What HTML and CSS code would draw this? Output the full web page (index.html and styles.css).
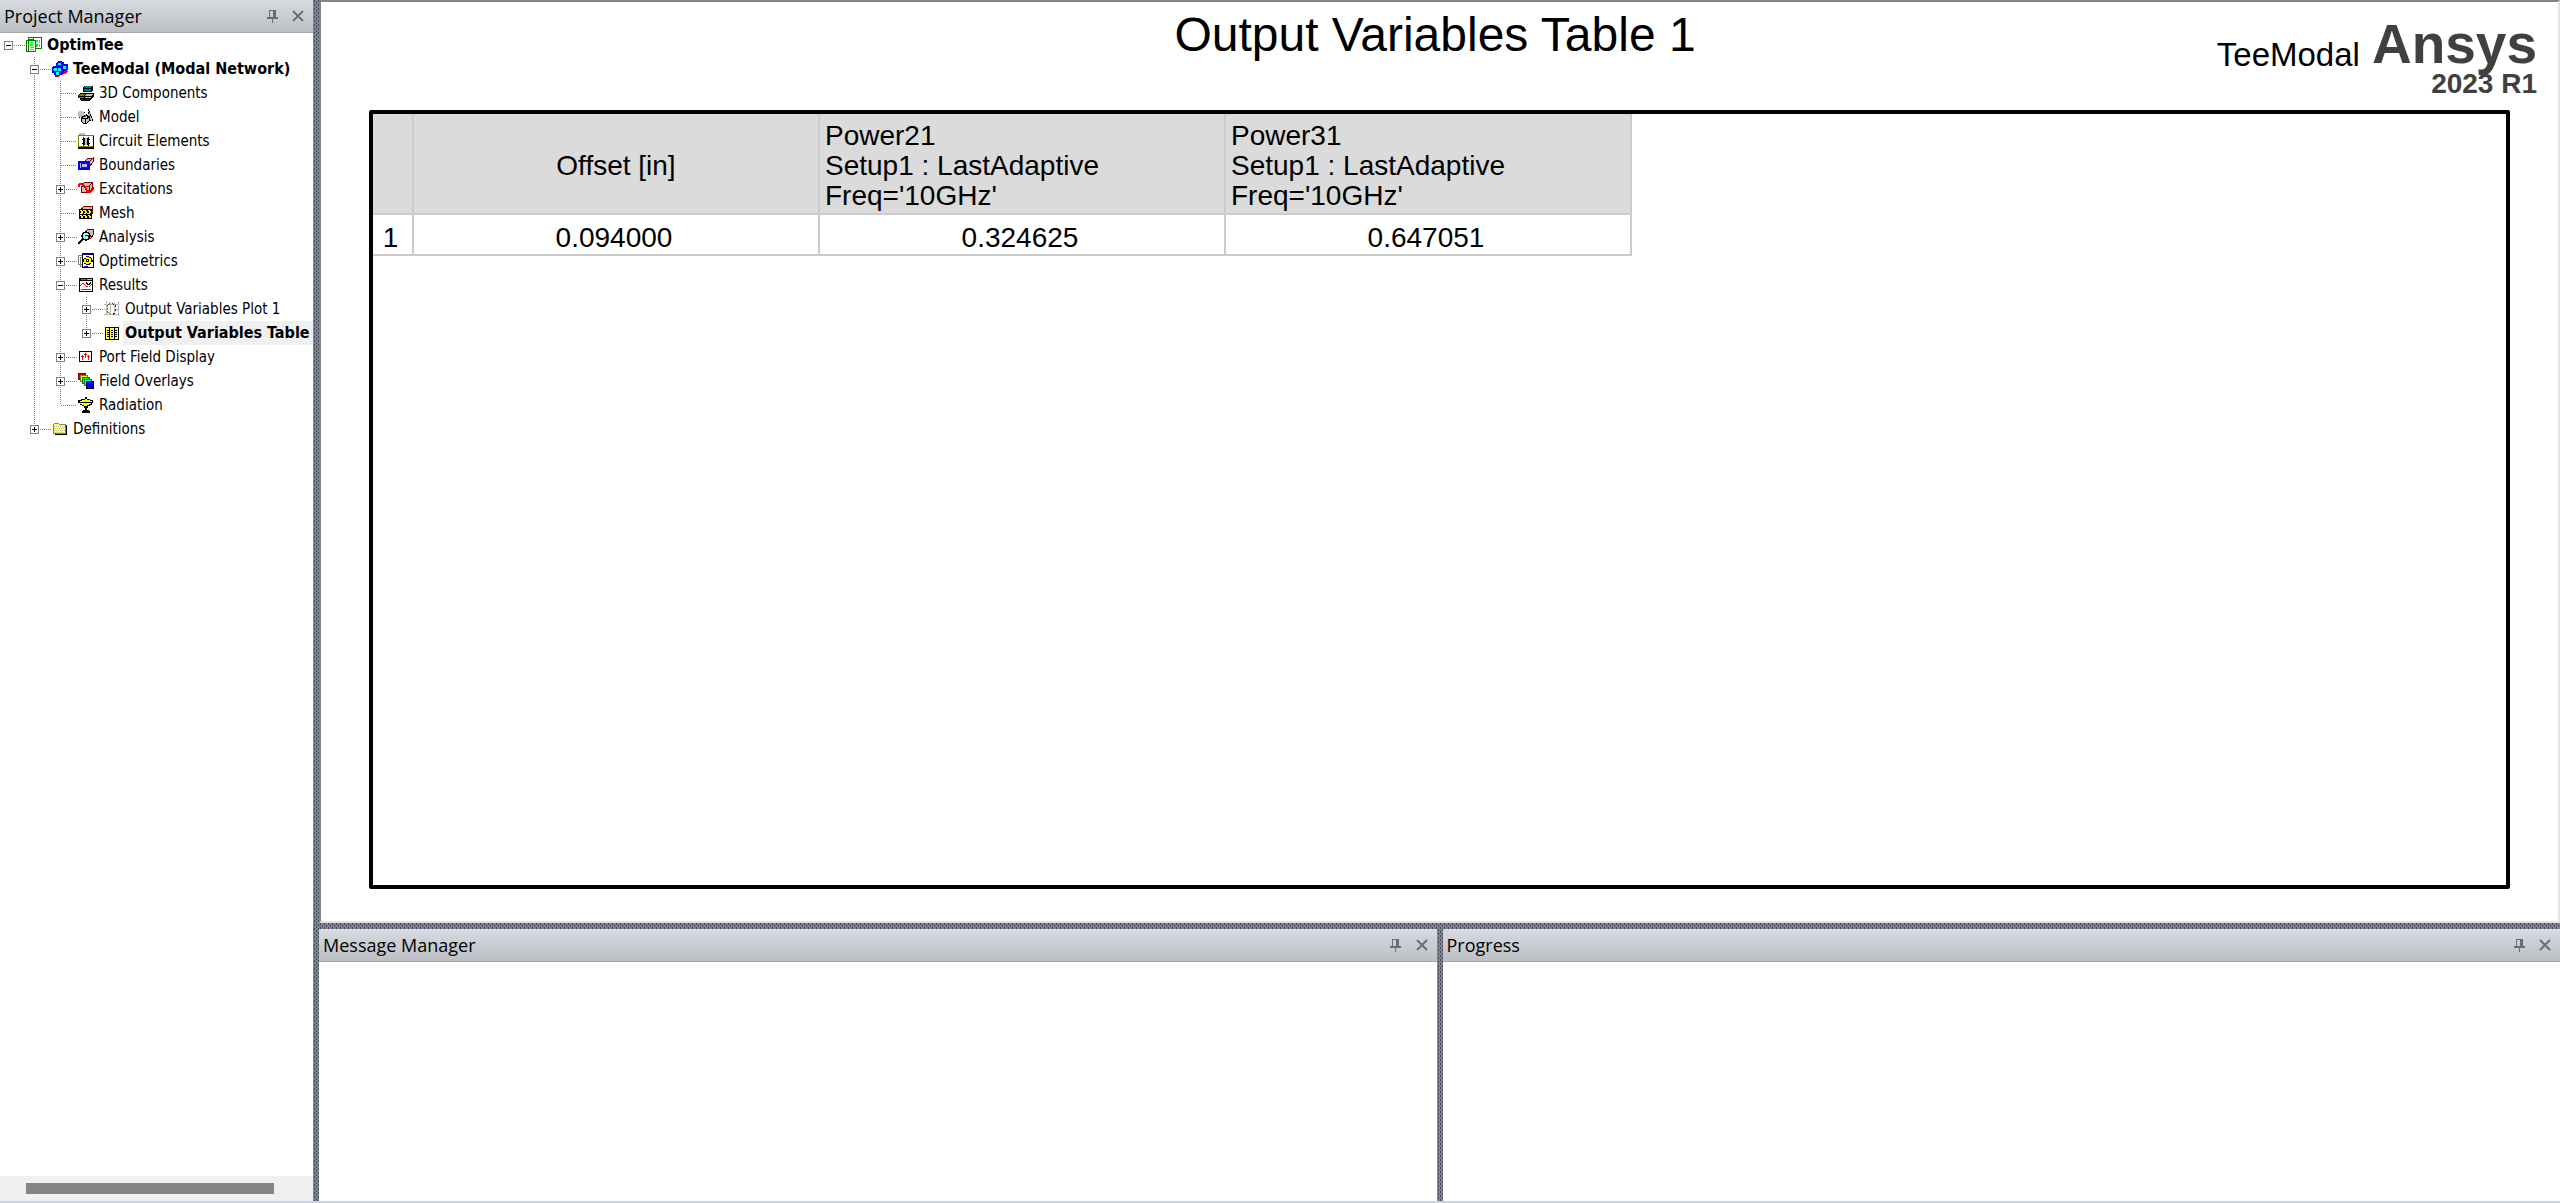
FILE: index.html
```html
<!DOCTYPE html>
<html lang="en">
<head>
<meta charset="utf-8">
<title>OptimTee - Output Variables Table 1</title>
<link rel="stylesheet" href="styles.css">
</head>
<body>
<svg class="defs" aria-hidden="true">
  <symbol id="pin" viewBox="0 0 11 13"><path fill="#6d6d6d" d="M2 0h7v7H8V1H3v6H2zM6 1h2v6H6zM0 7h11v2H0zM5 9h1v4H5z"/></symbol>
  <symbol id="close" viewBox="0 0 12 12"><path stroke="#6d6d6d" stroke-width="2" fill="none" d="M1 1l10 10M11 1L1 11"/></symbol>
</svg>
<div class="app">
  <aside class="panel project">
    <header class="panel-head">
      <h2>Project Manager</h2>
      <button aria-label="Auto hide"><svg width="11" height="13"><use href="#pin"/></svg></button>
      <button aria-label="Close"><svg width="12" height="12"><use href="#close"/></svg></button>
    </header>
    <nav class="tree-scroll">
      <ul class="tree">
        <li>
          <div class="row"><button class="box" aria-label="Collapse"></button><i class="dots"></i>
            <svg class="icon" viewBox="0 0 16 16"><path fill="#008000" d="M2 0h14v12h-6v3H0V3h2z"/><path fill="#fff" d="M3 1h4v1H3zM8 1h7v10h-5V3H8zM1 4h1v10H1zM3 4h6v10H3z"/><path fill="#0f0" d="M4 5h3v1H4zM4 7h3v2H4zM4 10h4v1H4zM4 12h4v1H4zM10 3h2v2h-2zM13 3h1v3h-1zM10 7h2v3h-2zM13 7h1v3h-1z"/></svg>
            <b class="label">OptimTee</b></div>
          <ul>
            <li>
              <div class="row"><button class="box" aria-label="Collapse"></button><i class="dots"></i>
                <svg class="icon" viewBox="0 0 16 16"><path fill="red" d="M3 13h6l3-3h4l-3 3-4 1-3 2H3z"/><path fill="#00f" d="M6 0h4v1h2v2h3l1 1v5l-2 1h-2v2h-2v2H8l-1 1H3l-1-3H0V6h1V5h3V2h1z"/><path fill="#0ff" d="M6 2h3v2H6zM11 5h3v3h-3zM6 7h3v3H6zM2 7h3v3H2zM4 11h3v3H4zM1 8h1v1H1z"/></svg>
                <b class="label">TeeModal (Modal Network)</b></div>
              <ul>
                <li><div class="row"><i class="dots leaf"></i>
                  <svg class="icon" viewBox="0 0 16 16"><path d="M6 1h9v4l-2 2H5V3zM2 8h14v3l-3 3-2 2H3l-1-3H0v-2z"/><path fill="#008080" d="M7 1h7l-1 2H6zM6 4h7v2H6z"/><path fill="#808000" d="M2 9h5l-1 2H1zM1 12h5v1H1z"/><path fill="#c0c0c0" d="M8 9h7l-1 2H7zM7 12h6v1H7z"/><path fill="#800000" d="M3 14h8v1H3z"/></svg>
                  <span class="label">3D Components</span></div></li>
                <li><div class="row"><i class="dots leaf"></i>
                  <svg class="icon" viewBox="0 0 16 16"><path fill="#c0c0c0" d="M1 2h4v1h1v4H5v1H1V7H0V3h1zM10 1h1l4 9-2 2H9z"/><path fill="#c0c0c0" stroke="#000" d="M3.500 8.500l4-2 4 1v4l-3 3h-3l-2-2z"/><path fill="none" stroke="#000" d="M3.500 9l4 1v5M7.500 10l4-2"/><path stroke="#000" stroke-dasharray="2 1" fill="none" d="M10.500 0v6M11 2l4 9-3 1M6 3l3 3M1 8l2 2"/></svg>
                  <span class="label">Model</span></div></li>
                <li><div class="row"><i class="dots leaf"></i>
                  <svg class="icon" viewBox="0 0 16 16"><path fill="#c0c0a0" d="M1 0h6v2H1z"/><path fill="#fff" stroke="#808000" d="M.5 2.500h15v11H.5z"/><path d="M0 14h16v2H0zM5 4h1v1h4V4h1v2h1v1h-1v3h1v1h-1v2h-1v-1H6v1H5v-2H4v-1h1V7H4V6h1zM15 3h1v12h-1z"/><path fill="#c0c0c0" d="M7 5h2v7H7z"/></svg>
                  <span class="label">Circuit Elements</span></div></li>
                <li><div class="row"><i class="dots leaf"></i>
                  <svg class="icon" viewBox="0 0 16 16"><path fill="#c0c0c0" stroke="#800000" d="M5.500 5.500l4-4h5v4l-3 4"/><path d="M11 5l4-4v4l-3 4" fill="#c0c0c0" stroke="#800000"/><path fill="#c0c0c0" stroke="#00f" stroke-width="2" d="M1 5h10v7H1z"/><path fill="none" stroke="#800000" d="M3.500 6.500h6v4h-6z"/></svg>
                  <span class="label">Boundaries</span></div></li>
                <li><div class="row"><button class="box plus" aria-label="Expand"></button><i class="dots"></i>
                  <svg class="icon" viewBox="0 0 16 16"><path fill="#c0c0c0" stroke="#800000" d="M3.500 5.500l3-4h8v5l-3 5h-8zM4 5.500h7v6M11 5l3-3"/><path fill="none" stroke="red" stroke-width="2" d="M0 6l2-3h2l3 3 2 4 3 1 4-4"/></svg>
                  <span class="label">Excitations</span></div></li>
                <li><div class="row"><i class="dots leaf"></i>
                  <svg class="icon" viewBox="0 0 16 16"><path fill="#c0c0c0" stroke="#800000" d="M3.500 4l2-2.500h9V8l-2 3z"/><path d="M1 4h13v10H1z"/><path fill="#ff0" d="M2 5h2v1H2zM5 5h3v1H5zM10 5h2v1h-2zM3 6h2v2H3zM7 6h2v2H7zM11 6h2v2h-2zM2 8h3v1H2zM6 8h2v1H6zM9 8h3v1H9zM2 10h2v1H2zM5 10h3v1H5zM10 10h2v1h-2zM3 11h2v2H3zM7 11h2v2H7zM11 11h2v2h-2z"/></svg>
                  <span class="label">Mesh</span></div></li>
                <li><div class="row"><button class="box plus" aria-label="Expand"></button><i class="dots"></i>
                  <svg class="icon" viewBox="0 0 16 16"><path fill="#c0c0c0" stroke="#800000" d="M7.500 2.500l2-2h6v5l-3 4z"/><circle cx="8" cy="7" r="4" fill="#9cf5ff" stroke="#000" stroke-width="1.500"/><path fill="none" stroke="#800000" d="M7 6.500h3v3"/><path stroke="#000" stroke-width="2" d="M5 10l-5 5"/></svg>
                  <span class="label">Analysis</span></div></li>
                <li><div class="row"><button class="box plus" aria-label="Expand"></button><i class="dots"></i>
                  <svg class="icon" viewBox="0 0 16 16"><path fill="#fff" stroke="#808080" d="M.5 2.500h6v9h-6zM2.500 4.500h6v9h-6z"/><path fill="#fff" stroke="#000" d="M4.500 1.500h11v13h-11z"/><path fill="#000080" d="M4 0h12v2H4z"/><path fill="#00f" d="M6 13h4v1H6z"/><path d="M8 3h3v1h2v1h1v2h1v2h-2v2h-1v1H8v-1H6V9H5V6h1V5h2z"/><path fill="#ff0" d="M8 4h3v1h2v5h-2v1H8v-1H6V6h2z"/><path d="M8 6h3v3H8z"/><path fill="#fff" d="M9 7h1v1H9z"/></svg>
                  <span class="label">Optimetrics</span></div></li>
                <li>
                  <div class="row"><button class="box" aria-label="Collapse"></button><i class="dots"></i>
                    <svg class="icon" viewBox="0 0 16 16"><path d="M1 1h14v14H1z"/><path fill="#fff" d="M2 4h12v10H2z"/><path fill="#00c000" d="M3 2h5v1H3z"/><path fill="#c0c0c0" d="M9 2h5v1H9z"/><path fill="red" d="M2 8h1v1H2zM3 7h1v1H3zM4 6h2v1H4zM6 7h1v1H6zM7 8h1v1H7zM8 9h2v1H8zM11 9h1v1h-1zM12 8h1v1h-1zM13 7h1v1h-1zM3 12h10v1H3z"/><path d="M8 5h1v1h1v1h1V6h1V5h1v2h-1v1H9V7H8z"/></svg>
                    <span class="label">Results</span></div>
                  <ul>
                    <li><div class="row"><button class="box plus" aria-label="Expand"></button><i class="dots"></i>
                      <svg class="icon" viewBox="0 0 16 16"><path fill="none" stroke="#b8b8b8" d="M0 3.500h15M0 8.500h4M10 8.500h5M0 13.500h15M2.500 0v14M6.500 1v12M10.500 1v12M14.500 0v15"/><path fill="none" stroke="#808000" stroke-dasharray="2 1" d="M6 2.500L3.500 5v6l3 2.500"/><path fill="none" stroke="#800000" stroke-dasharray="2 2" d="M8 2.500l3.500 2v7L9 13.500"/></svg>
                      <span class="label">Output Variables Plot 1</span></div></li>
                    <li><div class="row"><button class="box plus" aria-label="Expand"></button><i class="dots"></i>
                      <svg class="icon" viewBox="0 0 16 16"><path d="M1 2h14v13H1z"/><path fill="#ffff40" d="M2 3h3v11H2zM6 3h4v11H6zM11 3h3v11h-3z"/><path d="M3 5h2v1H3zM3 7h2v1H3zM3 9h2v1H3zM3 11h2v1H3zM7 5h2v1H7zM7 7h2v1H7zM7 9h2v1H7zM7 11h2v1H7zM11 5h2v1h-2zM11 7h2v1h-2zM11 9h2v1h-2zM11 11h2v1h-2z"/></svg>
                      <b class="label selected">Output Variables Table</b></div></li>
                  </ul>
                </li>
                <li><div class="row"><button class="box plus" aria-label="Expand"></button><i class="dots"></i>
                  <svg class="icon" viewBox="0 0 16 16"><path fill="#fff" stroke="#000" d="M1.500 2.500h12v10h-12z"/><path fill="red" d="M3 7h1V6h1v1h1v1H5v3H4V8H3zM6 5h1V4h1v1h1v1H8v3H7V6H6zM9 7h1V6h1v1h1v1h-1v3h-1V8H9z"/></svg>
                  <span class="label">Port Field Display</span></div></li>
                <li><div class="row"><button class="box plus" aria-label="Expand"></button><i class="dots"></i>
                  <svg class="icon" viewBox="0 0 16 16"><path fill="#d00000" stroke="#800000" d="M.5.5h7v6h-7z"/><path fill="#ff0" stroke="#808000" d="M2.500 2.500h7v6h-7z"/><path fill="#0f0" stroke="#008000" d="M4.500 4.500h7v6h-7z"/><path fill="#0ff" stroke="#008080" d="M6.500 6.500h7v6h-7z"/><path fill="#00f" stroke="#000" d="M8.500 8.500h7v7h-7z"/></svg>
                  <span class="label">Field Overlays</span></div></li>
                <li><div class="row"><i class="dots leaf"></i>
                  <svg class="icon" viewBox="0 0 16 16"><path d="M7 0h2v2h3v1h3v3h-1v2h-2v1h-2v2H9v2h2v1h1v2H4v-2h1v-1h2v-2H6V9H4V8H2V6H0V3h3V2h4z"/><path fill="#ff0" d="M7 2h2v1h3v1h2v1H2V4h2V3h3zM2 6h11v1h-2v1H9v1H6V8H4V7H2z"/></svg>
                  <span class="label">Radiation</span></div></li>
              </ul>
            </li>
            <li><div class="row"><button class="box plus" aria-label="Expand"></button><i class="dots"></i>
              <svg class="icon" viewBox="0 0 16 16"><path d="M3 13h11V4h1v10H3z"/><path fill="#ffff60" stroke="#808080" d="M1.500 12.500v-9l1-1h4l1 1h6v9z"/><path stroke="#c0c0a0" stroke-dasharray="1 1" d="M2 5.500h11M3 7.500h10M2 9.500h11M3 11.500h10"/></svg>
              <span class="label">Definitions</span></div></li>
          </ul>
        </li>
      </ul>
    </nav>
    <div class="hscroll"><div class="thumb"></div></div>
  </aside>
  <div class="splitter"></div>
  <div class="work">
    <main class="report">
      <header class="report-head">
        <h1>Output Variables Table 1</h1>
        <div class="brand"><span class="design">TeeModal</span><span class="ansys">Ansys</span><span class="version">2023 R1</span></div>
      </header>
      <div class="frame">
        <table>
          <colgroup><col class="num"><col class="val"><col class="val"><col class="val"></colgroup>
          <thead><tr><th></th><th>Offset [in]</th><th class="trace">Power21<br>Setup1 : LastAdaptive<br>Freq='10GHz'</th><th class="trace">Power31<br>Setup1 : LastAdaptive<br>Freq='10GHz'</th></tr></thead>
          <tbody><tr><td>1</td><td>0.094000</td><td>0.324625</td><td>0.647051</td></tr></tbody>
        </table>
      </div>
    </main>
    <div class="splitter"></div>
    <div class="docks">
      <section class="panel">
        <header class="panel-head">
          <h2>Message Manager</h2>
          <button aria-label="Auto hide"><svg width="11" height="13"><use href="#pin"/></svg></button>
          <button aria-label="Close"><svg width="12" height="12"><use href="#close"/></svg></button>
        </header>
      </section>
      <div class="splitter"></div>
      <section class="panel">
        <header class="panel-head">
          <h2>Progress</h2>
          <button aria-label="Auto hide"><svg width="11" height="13"><use href="#pin"/></svg></button>
          <button aria-label="Close"><svg width="12" height="12"><use href="#close"/></svg></button>
        </header>
      </section>
    </div>
  </div>
</div>
</body>
</html>
```
FILE: styles.css
```css
* { box-sizing: border-box; }
body { margin: 0; background: #fff; color: #000; font-family: "DejaVu Sans Condensed", "Noto Sans", sans-serif; }
h1, h2 { margin: 0; font-weight: 400; }
ul { list-style: none; margin: 0; padding: 0; }
button { border: 0; padding: 0; background: none; }
.defs { display: none; }

.app {
  display: grid;
  grid-template-columns: 313px 6px minmax(0, 1fr);
  height: 100vh;
  border-bottom: 2px solid #ced2df;
}
.splitter {
  background:
    repeating-linear-gradient(90deg, #848484 0 1px, transparent 1px 2px),
    conic-gradient(#848484 25%, #3f4a66 0 50%, #848484 0 75%, #3f4a66 0) 0 0 / 4px 4px;
}

.panel { display: flex; flex-direction: column; min-width: 0; background: #fff; }
.panel-head {
  display: flex;
  align-items: center;
  height: 33px;
  padding: 0 2px 0 4px;
  background: linear-gradient(#d7dbe1, #bcc0c5);
  border-bottom: 1px solid #a5a5a5;
}
.panel-head h2 { flex: 1; font: 18px/30px "Open Sans", "Noto Sans", sans-serif; }
.panel-head button { display: grid; place-items: center; width: 26px; height: 26px; }

.tree-scroll { flex: 1; overflow: hidden; }
.tree { padding-left: 4px; }
.tree ul { padding-left: 26px; }
.tree ul > li {
  background: repeating-linear-gradient(#808080 0 1px, transparent 1px 2px) 4px 0 / 1px 100% no-repeat;
}
.tree ul > li:last-child { background-size: 1px 12px; }
.row { display: flex; align-items: center; height: 24px; font-size: 15px; line-height: 24px; white-space: nowrap; }
.row b { font-size: 16px; }
.box {
  flex: none;
  width: 9px;
  height: 9px;
  border: 1px solid #808080;
  background: linear-gradient(#000, #000) center / 5px 1px no-repeat #fff;
}
.box.plus {
  background:
    linear-gradient(#000, #000) center / 5px 1px no-repeat,
    linear-gradient(#000, #000) center / 1px 5px no-repeat #fff;
}
.dots {
  flex: none;
  width: 11px;
  height: 1px;
  margin: 0 1px;
  background: repeating-linear-gradient(90deg, #808080 0 1px, transparent 1px 2px);
}
.dots.leaf { width: 16px; margin-left: 5px; }
.icon { flex: none; width: 16px; height: 16px; margin-right: 3px; shape-rendering: crispEdges; }
.label { flex: 1; padding-left: 2px; }
.selected { background: #f0f0f0; }
.hscroll { height: 25px; padding: 7px 39px 7px 26px; background: #f0f0f0; }
.thumb { height: 11px; background: #858585; }

.work { display: grid; grid-template-rows: minmax(0, 923fr) 6px minmax(0, 272fr); min-width: 0; }
.docks { display: grid; grid-template-columns: minmax(0, 1fr) 6px minmax(0, 1fr); }

.report {
  display: flex;
  flex-direction: column;
  border: 2px solid #e3e3e3;
  border-top-color: #848484;
  border-left-color: #848484;
  font-family: "Liberation Sans", Arial, sans-serif;
}
.report-head {
  display: grid;
  grid-template-columns: 1fr auto 1fr;
  height: 108px;
  padding: 6px 21px 0 12px;
}
.report-head h1 { grid-column: 2; font-size: 48px; line-height: 54px; }
.brand {
  display: grid;
  grid-template-columns: auto auto;
  justify-content: end;
  align-content: start;
  align-items: end;
  column-gap: 12px;
  padding-top: 8px;
  color: #404040;
  font-weight: 700;
}
.design { color: #000; font-size: 33px; line-height: 34px; font-weight: 400; }
.ansys { font-size: 55px; line-height: 56px; }
.version { grid-column: 1 / 3; justify-self: end; font-size: 28px; line-height: 24px; }

.frame { flex: 1; margin: 0 48px 32px; border: 4px solid #000; border-radius: 2px; }
table { table-layout: fixed; width: 1259px; border-spacing: 0; font-size: 28px; line-height: 30px; }
.num { width: 41px; }
.val { width: 406px; }
th, td { border: solid #cbcbcb; border-width: 0 2px 2px 0; font-weight: 400; text-align: center; }
th { height: 101px; padding: 4px 0 0; background: #dbdbdb; }
th.trace { padding: 4px 5px 0; text-align: left; }
td { height: 41px; padding: 6px 4px 0 0; }
```
